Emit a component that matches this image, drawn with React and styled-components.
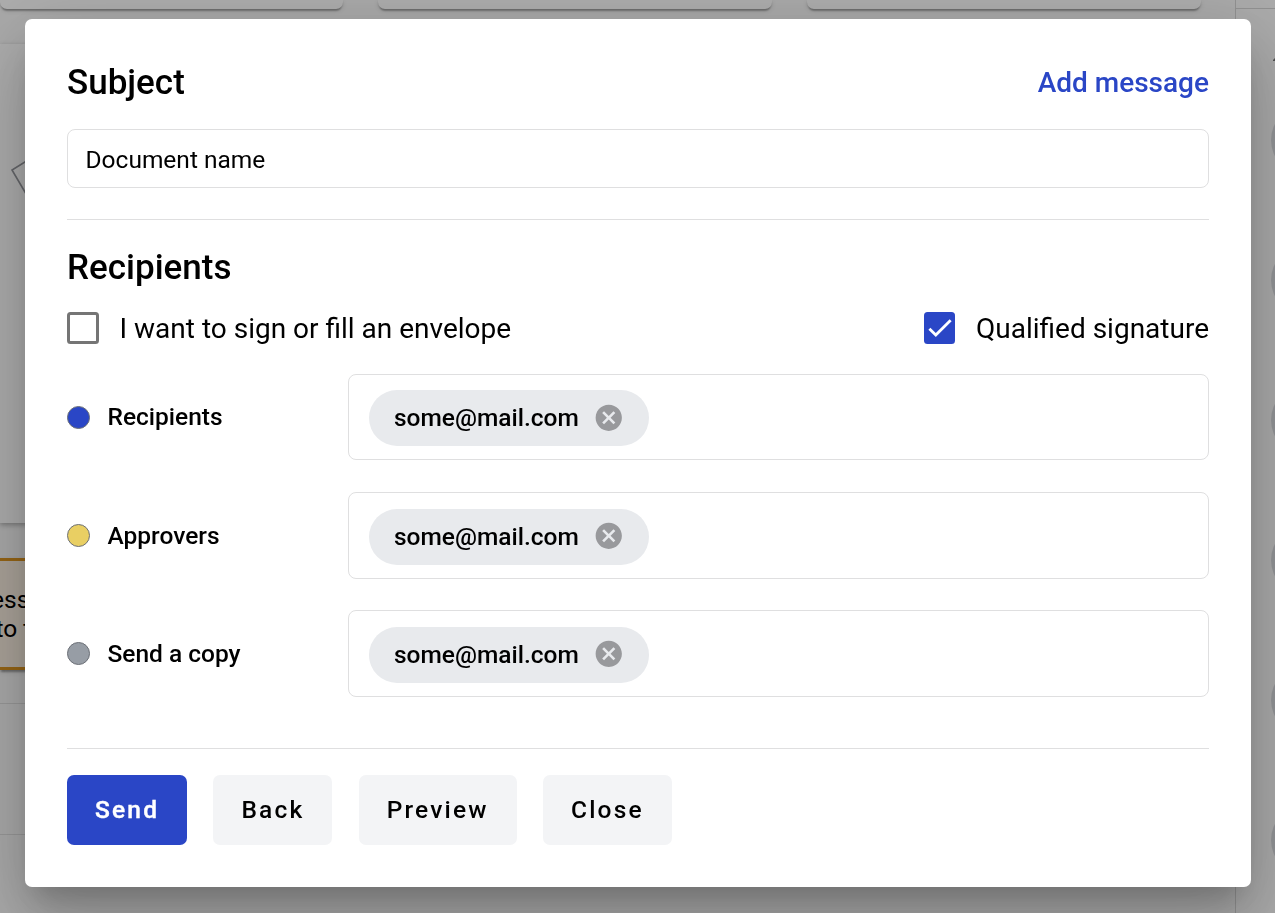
import React from "react";
import styled, { createGlobalStyle } from "styled-components";

const Global = createGlobalStyle`
  * { box-sizing: border-box; }
  html, body { margin: 0; height: 100%; overflow: hidden; }
  body { font-family: Roboto, "Liberation Sans", sans-serif; color: #000; background: #fafafa; }
  button, input { font-family: inherit; }
`;

const Page = styled.div`
  display: flex;
  width: 1275px;
  height: 913px;
  overflow: hidden;
  background: #fafafa;
`;

const Main = styled.div`
  flex: 0 0 1235px;
  display: flex;
  flex-direction: column;
`;

const cardShadow = "0 3.5px 1.75px -1.75px rgba(0,0,0,.2), 0 1.75px 1.75px rgba(0,0,0,.14), 0 1.75px 5.25px rgba(0,0,0,.12)";

const CardStrip = styled.div`
  display: grid;
  grid-template-columns: 343px 394px 394px;
  column-gap: 35px;
  height: 44px;
`;

const StripCard = styled.div`
  height: 9px;
  background: #fff;
  border-radius: 0 0 7px 7px;
  box-shadow: ${cardShadow};
`;

const Preview = styled.div`
  flex: 0 0 479px;
  width: 1201px;
  padding: 116px 0 0 11px;
  background: #fff;
  box-shadow: 0 1.75px 5.25px rgba(0,0,0,.3);
  svg { display: block; overflow: visible; }
`;

const Alert = styled.div`
  width: 1201px;
  height: 112px;
  margin-top: 35px;
  padding-top: 24px;
  border: solid #dd951f;
  border-width: 3px 0;
  background: #fcf1e3;
  box-shadow: ${cardShadow};
  font-size: 24.5px;
  line-height: 29px;
  white-space: nowrap;
`;

const AlertLine = styled.div`
  margin-left: ${(p) => p.$shift}px;
`;

const Footer = styled.div`
  height: 132px;
  width: 1201px;
  margin-top: 33px;
  border: solid #e0e0e0;
  border-width: 1px 0;
`;

const Sidebar = styled.div`
  flex: 1;
  overflow: hidden;
  border-left: 1px solid #d6d6d6;
  background: #fcfcfc;
`;

const SideTop = styled.div`
  height: 9px;
  border-bottom: 1px solid #d6d6d6;
`;

const SideMark = styled.svg`
  display: block;
  margin: 48px 0 0 37px;
`;

const Avatars = styled.div`
  display: flex;
  flex-direction: column;
  gap: 70px;
  margin: 42px 0 0 35px;
`;

const Avatar = styled.div`
  width: 70px;
  height: 70px;
  border-radius: 50%;
  background: #d9dbdf;
`;

const Backdrop = styled.div`
  position: fixed;
  inset: 0;
  display: flex;
  align-items: flex-start;
  padding: 19px 0 0 25px;
  background: rgba(0, 0, 0, 0.32);
`;

const Dialog = styled.div`
  width: 1226px;
  height: 868px;
  padding: 42px;
  background: #fff;
  border-radius: 7px;
  box-shadow: 0 19.25px 26.25px -12.25px rgba(0,0,0,.2), 0 42px 66.5px 5.25px rgba(0,0,0,.14), 0 15.75px 80.5px 14px rgba(0,0,0,.12);
`;

const SpacedRow = styled.div`
  display: flex;
  align-items: center;
  justify-content: space-between;
`;

const Title = styled.h2`
  margin: 0;
  font-size: 35px;
  font-weight: 500;
  line-height: 41px;
`;

const TextLink = styled.button`
  height: 42px;
  padding: 2px 0 0;
  border: 0;
  background: none;
  color: #2a46c6;
  font-size: 28px;
  font-weight: 500;
  line-height: 40px;
`;

const SubjectInput = styled.input`
  display: block;
  width: 100%;
  height: 59px;
  margin-top: 26px;
  padding: 2px 17.5px 0;
  border: 1px solid #dfdfe0;
  border-radius: 8px;
  color: #000;
  font-size: 24.5px;
  outline: none;
`;

const Divider = styled.hr`
  height: 1px;
  margin: ${(p) => p.$top}px 0 ${(p) => p.$bottom}px;
  border: 0;
  background: #dfdfe0;
`;

const Options = styled(SpacedRow)`
  height: 32px;
  margin: 24px 0 29.75px;
`;

const Option = styled.div`
  display: flex;
  align-items: center;
  gap: 21px;
  font-size: 28px;
  line-height: 32px;
`;

const OptionText = styled.span`
  padding-top: 2px;
`;

const Box = styled.span`
  display: block;
  width: 31.5px;
  height: 31.5px;
  border-radius: 3.5px;
  border: ${(p) => (p.$checked ? "0" : "3px solid #757575")};
  background: ${(p) => (p.$checked ? "#2a46c6" : "#fff")};
  svg { display: block; }
`;

const Groups = styled.div`
  display: flex;
  flex-direction: column;
  gap: 31.75px;
`;

const Group = styled.div`
  display: grid;
  grid-template-columns: 281px 1fr;
  align-items: center;
  height: 86.5px;
`;

const GroupLabel = styled.div`
  display: flex;
  align-items: center;
  gap: 17.5px;
  padding-top: 0.5px;
  font-size: 24.5px;
  font-weight: 500;
  line-height: 28px;
`;

const Dot = styled.span`
  width: 23px;
  height: 23px;
  border: 1px solid #6c7077;
  border-radius: 50%;
  background: ${(p) => p.$color};
`;

const Field = styled.div`
  display: flex;
  align-items: center;
  height: 100%;
  padding: 2.5px 0 0 20px;
  border: 1px solid #dfdfe0;
  border-radius: 8px;
`;

const Chip = styled.div`
  display: flex;
  align-items: center;
  justify-content: space-between;
  width: 280px;
  height: 56px;
  padding: 0 24.75px 0 25px;
  border-radius: 28px;
  background: #e8eaed;
  font-size: 24.5px;
  font-weight: 500;
  line-height: 28px;
  svg { display: block; margin-bottom: 1.5px; }
`;

const Actions = styled.div`
  display: flex;
  gap: 26.25px;
`;

const Button = styled.button`
  height: 70px;
  padding: 0 28px 2px;
  border: 0;
  border-radius: 7px;
  background: ${(p) => (p.$primary ? "#2a46c6" : "#f3f4f6")};
  color: ${(p) => (p.$primary ? "#fff" : "#000")};
  font-size: 24.5px;
  font-weight: 500;
  letter-spacing: 2.19px;
  -webkit-text-stroke: ${(p) => (p.$primary ? "0.4px #fff" : "0")};
`;

const groups = [
  { label: "Recipients", color: "#2a46c6" },
  { label: "Approvers", color: "#e9cf63" },
  { label: "Send a copy", color: "#979da5" },
];

function Check() {
  return (
    <svg width="31.5" height="31.5" viewBox="0 0 24 24">
      <path d="M4.1 12.7 9 17.6 20.3 6.3" fill="none" stroke="#fff" strokeWidth="2.13" />
    </svg>
  );
}

function Cancel() {
  return (
    <svg width="31.5" height="31.5" viewBox="0 0 24 24" fill="#98999c">
      <path d="M12 2C6.47 2 2 6.47 2 12s4.47 10 10 10 10-4.47 10-10S17.53 2 12 2zm5 13.59L15.59 17 12 13.41 8.41 17 7 15.59 10.59 12 7 8.41 8.41 7 12 10.59 15.59 7 17 8.41 13.41 12 17 15.59z" />
    </svg>
  );
}

export default function App() {
  return (
    <>
      <Global />
      <Page>
        <Main>
          <CardStrip>
            <StripCard />
            <StripCard />
            <StripCard />
          </CardStrip>
          <Preview>
            <svg width="40" height="50" viewBox="0 0 40 50" fill="none" stroke="#96989e" strokeWidth="1.6">
              <path d="M30 -8 1 10 21 44" />
            </svg>
          </Preview>
          <Alert>
            <AlertLine $shift={-9}>ess</AlertLine>
            <AlertLine $shift={-4.5}>to t</AlertLine>
          </Alert>
          <Footer />
        </Main>
        <Sidebar>
          <SideTop />
          <SideMark width="9" height="6" viewBox="0 0 9 6">
            <path d="M0 3 2 1H9V4H0z" fill="#777" />
          </SideMark>
          <Avatars>
            {[0, 1, 2, 3, 4, 5].map((n) => (
              <Avatar key={n} />
            ))}
          </Avatars>
        </Sidebar>
      </Page>
      <Backdrop>
        <Dialog>
          <SpacedRow>
            <Title>Subject</Title>
            <TextLink>Add message</TextLink>
          </SpacedRow>
          <SubjectInput defaultValue="Document name" />
          <Divider $top={31} $bottom={27} />
          <Title>Recipients</Title>
          <Options>
            <Option>
              <Box />
              <OptionText>I want to sign or fill an envelope</OptionText>
            </Option>
            <Option>
              <Box $checked>
                <Check />
              </Box>
              <OptionText>Qualified signature</OptionText>
            </Option>
          </Options>
          <Groups>
            {groups.map((g) => (
              <Group key={g.label}>
                <GroupLabel>
                  <Dot $color={g.color} />
                  {g.label}
                </GroupLabel>
                <Field>
                  <Chip>
                    some@mail.com
                    <Cancel />
                  </Chip>
                </Field>
              </Group>
            ))}
          </Groups>
          <Divider $top={51.25} $bottom={26} />
          <Actions>
            <Button $primary>Send</Button>
            <Button>Back</Button>
            <Button>Preview</Button>
            <Button>Close</Button>
          </Actions>
        </Dialog>
      </Backdrop>
    </>
  );
}
